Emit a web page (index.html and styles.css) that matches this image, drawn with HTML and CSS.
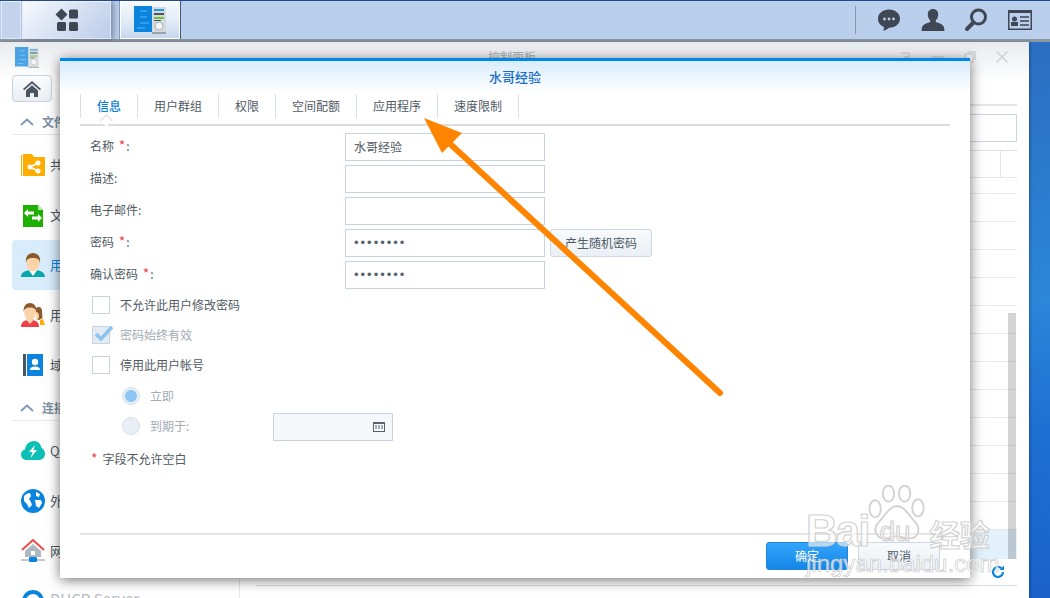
FILE: index.html
```html
<!DOCTYPE html>
<html lang="zh-CN">
<head>
<meta charset="utf-8">
<title>控制面板</title>
<link rel="stylesheet" href="styles.css">
</head>
<body>
<svg class="defs" width="0" height="0" aria-hidden="true">
  <symbol id="app" viewBox="0 0 32 28">
    <rect x="0" y="0" width="18" height="26" fill="#0a84dc"/>
    <rect x="18" y="1" width="14" height="25" fill="#d5dadd"/>
    <rect x="18" y="26" width="14" height="2" fill="#9aa3a8"/>
    <path d="M6 5h7M6 11h7M6 17h9M3 22h8" stroke="#58b9f5" stroke-width="1"/>
    <rect x="20" y="3" width="10" height="2" fill="#1b9be6"/>
    <rect x="20" y="7" width="10" height="2" fill="#4b5560"/>
    <rect x="20" y="11" width="10" height="2" fill="#76c043"/>
    <rect x="20" y="14" width="7" height="1" fill="#4b5560"/>
    <circle cx="25" cy="20" r="4" fill="#f3f6f7" stroke="#aab2b7"/>
  </symbol>
</svg>

<div class="desktop">
  <header class="dock">
    <div class="dock-btn dock-edge"></div>
    <div class="dock-btn dock-menu">
      <svg width="24" height="24" viewBox="0 0 24 24" fill="#3e4753">
        <path d="M6.5 0.5 12.5 6.5 6.5 12.5 0.5 6.5Z"/>
        <rect x="14" y="1.500" width="9" height="9" rx="1.500"/>
        <rect x="2" y="14" width="9" height="9" rx="1.500"/>
        <rect x="14" y="14" width="9" height="9" rx="1.500"/>
      </svg>
    </div>
    <div class="dock-btn dock-active"><svg width="32" height="28"><use href="#app"/></svg></div>
    <div class="dock-tools">
      <svg width="24" height="24" viewBox="0 0 24 24" fill="#3e4753">
        <path d="M12 1.500C5.600 1.500 1 5.600 1 10.700c0 3.700 2.300 6.700 5.900 8.200.2 1.200-.3 2.600-1 3.700 2.300-.3 4.600-1.300 6.300-2.900 6.200-.1 10.800-4 10.800-9C23 5.600 18.400 1.500 12 1.500Z"/>
        <g fill="#b9cfeb"><circle cx="7.500" cy="11" r="1.400"/><circle cx="12" cy="11" r="1.400"/><circle cx="16.500" cy="11" r="1.400"/></g>
      </svg>
      <svg width="24" height="24" viewBox="0 0 24 24" fill="#3e4753">
        <path d="M12 1c-3.300 0-5.200 2.300-5.200 5.400 0 2.400.9 4.600 2.400 5.800v1.800c-2.700 1-7.300 2.200-8.200 5.200L.5 23h23l-.5-3.800c-.9-3-5.500-4.200-8.200-5.200v-1.800c1.500-1.200 2.400-3.400 2.400-5.800C17.200 3.300 15.300 1 12 1Z"/>
      </svg>
      <svg width="24" height="24" viewBox="0 0 24 24" fill="none" stroke="#3e4753">
        <circle cx="14.500" cy="9" r="7" stroke-width="3"/>
        <path d="M9.500 14.500 3 21" stroke-width="4" stroke-linecap="round"/>
      </svg>
      <svg width="24" height="20" viewBox="0 0 24 20">
        <rect width="24" height="20" fill="#3e4753"/>
        <rect x="1.500" y="3" width="21" height="15.500" fill="#b9cfeb"/>
        <circle cx="6.500" cy="9" r="2.500" fill="#3e4753"/>
        <rect x="3" y="12" width="7" height="4" fill="#3e4753"/>
        <path d="M12 7h9M12 11h9M4 15.500h0M12 15h9" stroke="#3e4753" stroke-width="1.500"/>
      </svg>
    </div>
  </header>

  <main class="stage">
    <section class="window">
      <div class="win-title">
        <svg class="win-logo" width="24" height="21"><use href="#app"/></svg>
        <span class="win-name">控制面板</span>
        <div class="win-controls">
          <svg width="12" height="12" viewBox="0 0 12 12" fill="none" stroke="#cfd3d8" stroke-width="1.500"><path d="M1 2h8v4H5v3"/></svg>
          <svg width="12" height="12" viewBox="0 0 12 12" fill="none" stroke="#cfd3d8" stroke-width="1.500"><path d="M0 6h12"/></svg>
          <svg width="12" height="12" viewBox="0 0 12 12" fill="none" stroke="#cfd3d8" stroke-width="1.500"><path d="M1 3h8v8H1ZM3 1h8v8"/></svg>
          <svg width="12" height="12" viewBox="0 0 12 12" fill="none" stroke="#cfd3d8" stroke-width="1.500"><path d="M0.500 0.500l11 11M11.500 0.500l-11 11"/></svg>
        </div>
      </div>
      <div class="win-body">
        <aside class="sidebar">
          <button class="home-btn" type="button" aria-label="首页">
            <svg width="18" height="16" viewBox="0 0 18 16"><path d="M9 0 0 8l1.200 1.300L9 2.500l7.800 6.800L18 8Z" fill="#4a5460"/><path d="M3 9.500 9 4.300l6 5.200V16h-4v-4H7v4H3Z" fill="#4a5460"/></svg>
          </button>
          <div class="side-head first"><svg width="14" height="8" viewBox="0 0 14 8" fill="none" stroke="#7b99b6" stroke-width="1.800"><path d="M1 7 7 1.500 13 7"/></svg><span>文件共享</span></div>
          <div class="side-item">
            <svg width="24" height="22" viewBox="0 0 24 22"><path d="M2 0v22h22V3H13L11 0Z" fill="#ffae00"/><path d="M0 1h1v21H0Z" fill="#ffae00"/><g fill="#fff"><circle cx="9" cy="13" r="2.500"/><circle cx="17" cy="9" r="2.500"/><circle cx="17" cy="17" r="2.500"/></g><path d="M9 13 17 9M9 13l8 4" stroke="#fff" stroke-width="1.500"/></svg>
            <span>共享文件夹</span>
          </div>
          <div class="side-item">
            <svg width="24" height="24" viewBox="0 0 24 24"><path d="M2 2h15l5 5v17H2Z" fill="#1eb000"/><path d="M17 2l5 5h-5Z" fill="#bce8b0"/><path d="M3 10l4-4v2.500h6v3H7V14Zm18 5-4 4v-2.500h-6v-3h6V11Z" fill="#fff"/></svg>
            <span>文件服务</span>
          </div>
          <div class="side-item selected">
            <svg width="24" height="24" viewBox="0 0 24 24"><path d="M0 24c0-5 5-6 8-7h8c3 1 8 2 8 7Z" fill="#0aa6ae"/><path d="M7 16h10l-5 7Z" fill="#fff"/><ellipse cx="12" cy="10" rx="6.500" ry="8.500" fill="#fbd3a8"/><path d="M5 10C4 3 8 0 12 0s8 3 7 10c-.5-3.500-2-5-7-5s-6.500 1.500-7 5Z" fill="#8a5a2c"/></svg>
            <span>用户账号</span>
          </div>
          <div class="side-item">
            <svg width="24" height="24" viewBox="0 0 24 24"><path d="M19 17l3-1 2 6h-5Z" fill="#ffae00"/><path d="M15 5c3-2 6-.5 6 3l.5 7-3.500 2-3-1Z" fill="#8a5a2c"/><path d="M15 9c2 0 3 2 3 4 0 2-1 4-3 4Z" fill="#fbd3a8"/><path d="M0 24c0-5 3-6 6-7h6c3 1 6 2 6 7Z" fill="#ef3f4a"/><path d="M4.500 16h9l-4.500 5Z" fill="#fbd3a8"/><ellipse cx="9" cy="9" rx="5.800" ry="8" fill="#fbd3a8"/><path d="M2.700 9C2 3 5.500 0 9 0s7 3 6.300 9c-.5-3-2-4.500-6.300-4.500S3.200 6 2.700 9Z" fill="#8a5a2c"/></svg>
            <span>用户群组</span>
          </div>
          <div class="side-item">
            <svg width="24" height="24" viewBox="0 0 24 24"><rect x="2" y="1" width="3" height="22" fill="#4b5560"/><rect x="6" y="1" width="16" height="22" fill="#0a84dc"/><circle cx="14" cy="9" r="3.200" fill="#fff"/><path d="M9 17c0-3 3-3.500 5-3.500s5 .5 5 3.500Z" fill="#fff"/></svg>
            <span>域/LDAP</span>
          </div>
          <div class="side-head"><svg width="14" height="8" viewBox="0 0 14 8" fill="none" stroke="#7b99b6" stroke-width="1.800"><path d="M1 7 7 1.500 13 7"/></svg><span>连接性</span></div>
          <div class="side-item">
            <svg width="24" height="20" viewBox="0 0 24 20"><path d="M6 19C2 19 0 16.500 0 13.500 0 10.500 2 9 4 8.500 4.500 3.500 8.500 0 13 0c4 0 7 3 7.500 7 2.500 1 3.500 3.500 3.500 6 0 3.500-3 6-6 6Z" fill="#0dbfb4"/><path d="M14 4 8 11h3.500L9.500 17 16 9h-3.500Z" fill="#fff"/></svg>
            <span>QuickConnect</span>
          </div>
          <div class="side-item">
            <svg width="24" height="24" viewBox="0 0 24 24"><circle cx="12" cy="12" r="12" fill="#0a84dc"/><path d="M3 7c2-2 4-3 6-3l1 3-2 3 2 3 1 3-3 3-2-4-3-3ZM15 3l4 2-1 3-3-1ZM14 11h6l1 3-3 5-3-2Z" fill="#fff"/></svg>
            <span>外部访问</span>
          </div>
          <div class="side-item">
            <svg width="24" height="24" viewBox="0 0 24 24"><path d="M12 5 4 12v6h16v-6Z" fill="#aeb6bf"/><path d="M1 11 12 1l11 10" fill="none" stroke="#f04a4a" stroke-width="2"/><rect x="10" y="12" width="4" height="4" fill="#fff"/><path d="M0 21h24" stroke="#aeb6bf" stroke-width="1.500"/><rect x="8" y="18" width="8" height="5" rx="1" fill="#0a84dc"/></svg>
            <span>网络</span>
          </div>
          <div class="side-item faded">
            <svg width="24" height="24" viewBox="0 0 24 24"><circle cx="12" cy="12" r="11" fill="#0a84dc"/><circle cx="12" cy="12" r="7" fill="#fff"/></svg>
            <span>DHCP Server</span>
          </div>
        </aside>
        <div class="content">
          <div class="toolbar"></div>
          <div class="searchbox"></div>
          <div class="table-head"><div class="col-end"></div></div>
          <div class="table-gap"></div>
          <div class="rows">
            <div class="row"></div><div class="row"></div><div class="row"></div><div class="row"></div>
            <div class="row"></div><div class="row"></div><div class="row"></div><div class="row"></div>
            <div class="row"></div><div class="row"></div><div class="row"></div><div class="row"></div>
            <div class="row row-on"></div>
            <div class="scrollbar"></div>
          </div>
          <div class="pager">
            <svg width="14" height="14" viewBox="0 0 14 14" fill="none" stroke="#0a84dc" stroke-width="2.200"><path d="M12 7a5 5 0 1 1-1.600-3.700"/><path d="M13 0.500V5H8.500Z" fill="#0a84dc" stroke="none"/></svg>
          </div>
        </div>
      </div>
    </section>

    <section class="dialog">
      <h1 class="dlg-title">水哥经验</h1>
      <nav class="tabs">
        <div class="tab active">信息</div>
        <div class="tab">用户群组</div>
        <div class="tab">权限</div>
        <div class="tab">空间配额</div>
        <div class="tab">应用程序</div>
        <div class="tab">速度限制</div>
      </nav>
      <div class="dlg-body">
        <div class="form-grid">
          <label>名称 <em>*</em>:</label><div class="field">水哥经验</div><div></div>
          <label>描述:</label><div class="field"></div><div></div>
          <label>电子邮件:</label><div class="field"></div><div></div>
          <label>密码 <em>*</em>:</label><div class="field dots">••••••••</div><div class="btn-gen">产生随机密码</div>
          <label>确认密码 <em>*</em>:</label><div class="field dots">••••••••</div><div></div>
        </div>
        <div class="checks">
          <div class="check-row"><span class="box"></span>不允许此用户修改密码</div>
          <div class="check-row off"><span class="box on"><svg width="20" height="16" viewBox="0 0 20 16" fill="none" stroke="#8cc2ee" stroke-width="3.500"><path d="M2 8l5 5L18 1"/></svg></span>密码始终有效</div>
          <div class="check-row"><span class="box"></span>停用此用户帐号</div>
          <div class="radio-row off"><span class="radio on"></span>立即</div>
          <div class="radio-row off"><span class="radio"></span><span class="radio-label">到期于:</span>
            <div class="datebox"><svg width="12" height="10" viewBox="0 0 12 10"><rect width="12" height="10" fill="#59636e"/><path d="M1 2h10v7H1Z" fill="#f5f7fa"/><path d="M2 4h2M5 4h2M8 4h2M2 6h2M5 6h2M8 6h2" stroke="#59636e"/></svg></div>
          </div>
        </div>
        <p class="note"><em>*</em>字段不允许空白</p>
      </div>
      <footer class="dlg-foot">
        <div class="btn primary">确定</div>
        <div class="btn">取消</div>
      </footer>
    </section>

    <svg class="arrow" width="1050" height="556" viewBox="0 42 1050 556">
      <path d="M720 393 447 141" stroke="#ff8500" stroke-width="6" stroke-linecap="round" fill="none"/>
      <path d="M424 118 462 133 442 153Z" fill="#ff8500"/>
    </svg>

    <div class="watermark">
      <svg class="paw" width="58" height="59" viewBox="0 0 60 62" fill="rgba(255,255,255,.45)" stroke="#d2d2d2" stroke-width="2">
        <ellipse cx="7" cy="25" rx="6" ry="9"/>
        <ellipse cx="21" cy="9" rx="6" ry="8.500"/>
        <ellipse cx="38" cy="9" rx="6" ry="8.500"/>
        <ellipse cx="52" cy="24" rx="6" ry="9"/>
        <path d="M30 22C22 22 17 33 10 40 4 47 9 58 19 56c4-1 7-2 11-2s8 2 12 2c10 1 13-9 8-16-7-7-12-18-20-18Z"/>
      </svg>
      <div class="wm-big"><span class="wm-bai">Bai</span><span class="wm-du">du</span><span class="wm-cn">经验</span></div>
      <div class="wm-url">jingyan.baidu.com</div>
    </div>
  </main>
</div>
</body>
</html>
```

FILE: styles.css
```css
* { box-sizing: border-box; }
html, body { margin: 0; padding: 0; }
body {
  width: 1050px;
  height: 598px;
  overflow: hidden;
  font: 12px/1.4 "Noto Sans CJK SC", "Noto Sans", sans-serif;
  color: #505a64;
}
.defs { position: absolute; }
.desktop {
  width: 1050px;
  height: 598px;
  display: flex;
  flex-direction: column;
  background: linear-gradient(180deg, #2a6abd 0%, #2c86da 50%, #1f6fd2 72%, #1a62ca 100%);
  overflow: hidden;
}

/* dock */
.dock {
  flex: none;
  height: 42px;
  display: flex;
  background: #b9cfeb;
  border-top: 1px solid #1f4a8f;
  border-bottom: 3px solid #8e98a5;
  padding-left: 1px;
}
.dock-btn {
  height: 38px;
  display: flex;
  align-items: center;
  justify-content: center;
  border: 1px solid #dfe8f5;
  border-top-color: #eef3fa;
}
.dock-edge { width: 20px; background: #c3d3ec; }
.dock-menu {
  width: 89px;
  margin-left: 1px;
  background: linear-gradient(135deg, #f7f9fd 0%, #d4dff2 55%, #bccdea 100%);
  box-shadow: 3px 0 5px rgba(60, 70, 90, .45);
}
.dock-active {
  width: 60px;
  margin-left: 9px;
  background: linear-gradient(180deg, #f6f9fd 0%, #dfe9f6 60%, #c6d8ef 100%);
  border-color: #fff;
  box-shadow: 1px 0 0 #46587a, -1px 0 0 #8899b5;
}
.dock-tools {
  margin-left: auto;
  width: 195px;
  margin-top: 5px;
  height: 28px;
  padding: 0 18px 0 21px;
  display: flex;
  align-items: center;
  justify-content: space-between;
  border-left: 1px solid #8b98aa;
}

/* stage */
.stage { position: relative; flex: 1; min-height: 0; }
.window {
  position: absolute;
  left: 0;
  top: 0;
  width: 1029px;
  height: 556px;
  display: flex;
  flex-direction: column;
  background: linear-gradient(180deg, #e8ebee 0, #fff 38px);
  box-shadow: 1px 0 3px rgba(0, 0, 0, .3);
  overflow: hidden;
}
.win-title { flex: none; height: 30px; display: flex; align-items: center; position: relative; padding-left: 15px; }
.win-logo { opacity: .72; }
.win-name { position: absolute; left: 488px; top: 7px; color: #a9b0b8; }
.win-controls { margin-left: auto; width: 108px; margin-right: 21px; display: flex; justify-content: space-between; }
.win-body { flex: 1; min-height: 0; display: flex; }

/* sidebar */
.sidebar { flex: none; width: 240px; padding-left: 12px; border-right: 1px solid #e3e6ea; overflow: hidden; }
.home-btn {
  display: flex;
  align-items: center;
  justify-content: center;
  width: 40px;
  height: 27px;
  margin: 3px 0 0;
  padding: 0;
  border: 1px solid #c8d2de;
  border-radius: 4px;
  background: linear-gradient(180deg, #fbfcfd, #e9eef4);
}
.side-head {
  height: 26px;
  margin: 5px 0;
  display: flex;
  align-items: center;
  gap: 8px;
  padding-left: 8px;
  border-bottom: 1px solid #e2e8ee;
  color: #7b8fa5;
  font-weight: 700;
  font-size: 12px;
}
.side-head span { position: relative; top: 1px; }
.side-head.first { margin-top: 7px; }
.side-item {
  height: 50px;
  display: flex;
  align-items: center;
  gap: 5px;
  padding-left: 9px;
  font-size: 13px;
  color: #505a64;
  border-radius: 4px;
}
.side-item.selected { background: #d8ecfc; color: #0a84dc; }
.side-item.faded { color: #b4bac1; font-size: 15px; }
.side-item.faded span { position: relative; top: -3px; }

/* content behind the dialog */
.content { flex: 1; min-width: 0; padding: 0 12px 0 16px; }
.toolbar { height: 34px; border-bottom: 2px solid #e6e6e6; }
.searchbox { height: 28px; margin-top: 8px; border: 1px solid #c9d6e6; }
.table-head { position: relative; height: 28px; margin-top: 8px; border-top: 1px solid #d5e1ef; border-bottom: 1px solid #e6e6e6; }
.col-end { position: absolute; right: 16px; top: 0; bottom: 0; width: 1px; background: #dbe6f3; }
.table-gap { height: 16px; border-bottom: 1px solid #e8e8e8; }
.rows { position: relative; }
.row { height: 28px; border-bottom: 1px solid #e8e8e8; }
.row-on { height: 29px; background: #e2f1fc; border-bottom: none; }
.scrollbar { position: absolute; right: 1px; top: 119px; bottom: 0; width: 8px; background: rgba(0, 0, 0, .17); }
.pager {
  height: 27px;
  display: flex;
  align-items: center;
  justify-content: flex-end;
  padding-right: 12px;
  border-bottom: 1px solid #d3dce8;
}

/* dialog */
.dialog {
  position: absolute;
  left: 60px;
  top: 16px;
  width: 910px;
  height: 520px;
  display: flex;
  flex-direction: column;
  border-top: 3px solid #0086e8;
  background: linear-gradient(180deg, #d9ecfb 0, #fff 32px);
  box-shadow: 0 2px 12px rgba(0, 0, 0, .55);
}
.dlg-title {
  margin: 0;
  height: 33px;
  line-height: 31px;
  text-align: center;
  font-size: 13px;
  font-weight: 500;
  color: #1a6fc4;
}
.tabs {
  flex: none;
  display: flex;
  height: 32px;
  margin: 0 20px;
  padding-bottom: 6px;
  border-bottom: 2px solid #dcdcdc;
}
.tab {
  position: relative;
  padding: 0 16px;
  height: 24px;
  line-height: 23px;
  border-right: 1px solid #d7e0ea;
  color: #505a64;
  white-space: nowrap;
}
.tab.active { color: #0a7fd9; font-weight: 500; border-left: 1px solid #d7e0ea; }
.tab.active::after {
  content: "";
  position: absolute;
  left: 21px;
  bottom: -7px;
  width: 8px;
  height: 8px;
  background: #fff;
  border-left: 1px solid #d8d8d8;
  border-top: 1px solid #d8d8d8;
  transform: rotate(45deg);
}
.dlg-body { flex: 1; min-height: 0; padding: 7px 0 0 30px; }
.form-grid { display: grid; grid-template-columns: 255px 200px auto; grid-auto-rows: 28px; row-gap: 4px; align-items: center; }
.form-grid label { color: #505a64; padding-bottom: 2px; }
em { color: #f2414d; font-style: normal; font-size: 14px; line-height: 1; }
.form-grid em { margin: 0 1px 0 2px; }
.field { height: 28px; line-height: 26px; padding-left: 8px; border: 1px solid #c8d3e1; background: #fff; }
.dots { font-family: "Liberation Sans", sans-serif; font-size: 13px; letter-spacing: 2px; color: #59636e; }
.btn-gen {
  justify-self: start;
  width: 102px;
  height: 28px;
  margin-left: 5px;
  line-height: 26px;
  text-align: center;
  border: 1px solid #cdd8e5;
  border-radius: 3px;
  background: linear-gradient(180deg, #f8fafc, #eaf0f6);
}
.checks { margin-top: 1px; }
.check-row, .radio-row { height: 30px; display: flex; align-items: center; }
.check-row { padding-left: 2px; }
.box { position: relative; width: 18px; height: 18px; margin-right: 10px; border: 1px solid #c8d3e1; background: #fff; flex: none; }
.box.on { background: #e2eaf3; }
.box.on svg { position: absolute; left: 1px; top: -1px; }
.off { color: #a3abb4; }
.radio-row { padding-left: 32px; position: relative; top: 1px; }
.radio { width: 18px; height: 18px; margin-right: 10px; border-radius: 50%; background: #e9eff5; border: 1px solid #d5dfe9; flex: none; }
.radio.on { background: radial-gradient(circle, #8cc6f5 0 5.500px, #e9eff5 6.500px); }
.radio-label { width: 123px; }
.datebox {
  width: 120px;
  height: 28px;
  margin-top: 2px;
  display: flex;
  align-items: center;
  justify-content: flex-end;
  padding-right: 7px;
  border: 1px solid #c8d3e1;
  background: #f5f7fa;
}
.note { margin: 11px 0 0 1px; color: #505a64; }
.note em { margin-right: 5px; }
.dlg-foot {
  flex: none;
  height: 45px;
  margin: 0 20px;
  padding: 7px 10px 0 0;
  display: flex;
  justify-content: flex-end;
  gap: 10px;
  border-top: 2px solid #e4e4e4;
}
.btn {
  width: 82px;
  height: 28px;
  line-height: 26px;
  text-align: center;
  border: 1px solid #ccd7e4;
  border-radius: 3px;
  background: linear-gradient(180deg, #f8fafc, #eaf0f6);
}
.btn.primary { color: #fff; border-color: #1b86dc; background: linear-gradient(180deg, #33a5fb, #1586e6); }

/* overlays */
.arrow { position: absolute; left: 0; top: 0; pointer-events: none; }
.watermark { position: absolute; left: 805px; top: 442px; width: 200px; height: 110px; pointer-events: none; }
.paw { position: absolute; left: 63px; top: 1px; }
.wm-big {
  position: absolute;
  left: 1px;
  top: 22px;
  font: 400 44px/50px "Liberation Sans", sans-serif;
  color: rgba(255, 255, 255, .6);
  -webkit-text-stroke: 1.2px #d2d2d2;
  white-space: nowrap;
}
.wm-bai { font-weight: 700; letter-spacing: -2px; }
.wm-du { margin-left: 11px; font-size: 28px; position: relative; top: -5px; }
.wm-cn { margin-left: 19px; font: 700 30px/50px "Noto Sans CJK SC", sans-serif; }
.wm-url {
  position: absolute;
  left: 1px;
  top: 65px;
  font: 400 24px/30px "Liberation Sans", sans-serif;
  color: rgba(255, 255, 255, .7);
  -webkit-text-stroke: 0.6px #c4c4c4;
  white-space: nowrap;
}
```
